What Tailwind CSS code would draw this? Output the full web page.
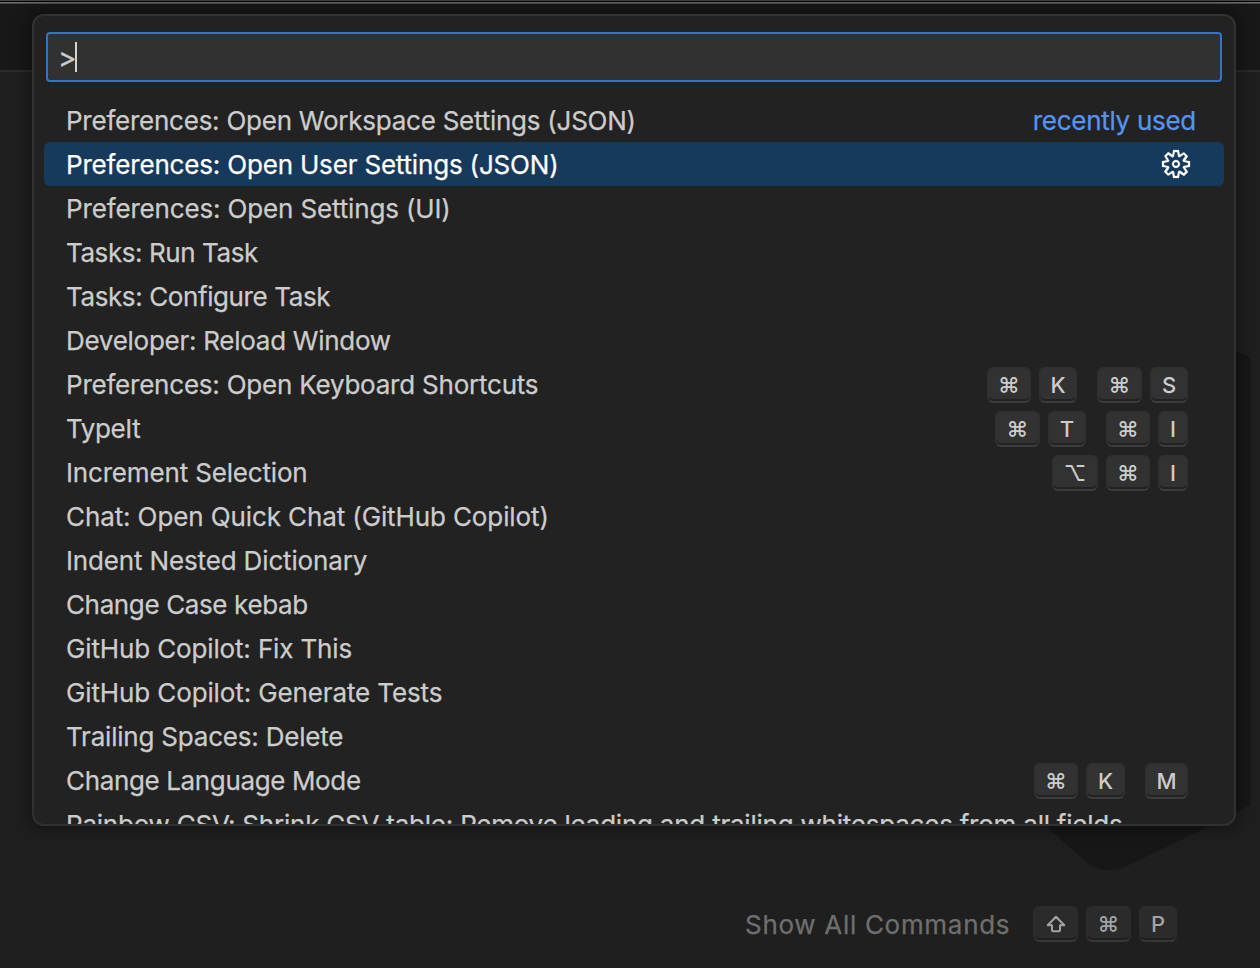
<!DOCTYPE html>
<html lang="en">
<head>
<meta charset="utf-8">
<title>Command Palette</title>
<script src="https://cdn.jsdelivr.net/npm/@tailwindcss/browser@4"></script>
</head>
<body class="relative h-[968px] w-[1260px] overflow-hidden bg-[#1f1f1f] font-['Inter',sans-serif] text-[26px] font-normal text-[#cccccc] [-webkit-text-stroke:0.25px_currentColor]">

<!-- Window edge and title bar -->
<div class="h-px bg-[#44473f]"></div>
<div class="h-px bg-black"></div>
<div class="h-px bg-[#6c6c6a]"></div>
<div class="h-px bg-[#494949]"></div>
<div class="h-[68px] border-b-2 border-[#2b2b2b] bg-[#181818]"></div>

<!-- Editor watermark -->
<svg class="absolute left-0 top-0" width="1260" height="968" viewBox="0 0 1260 968" fill="#171717"><path d="M1200 334L1251 358V804Q1240 811 1226 818L1129 865Q1120 870 1108 870Q1096 870 1086 862L1010 794Z"/></svg>
<div class="absolute left-[745px] top-[906px] flex h-9 items-center text-[#6f6f6f]">
  <span class="w-[288px] whitespace-nowrap tracking-[0.7px] [-webkit-text-stroke:0.25px_#6f6f6f]">Show All Commands</span>
  <div class="flex gap-2 text-[22px] font-medium text-[#a3a3a3] [-webkit-text-stroke:0px]">
    <kbd class="flex h-9 w-[45px] items-center justify-center rounded-[6px] border-2 border-[#2c2c2c] border-b-[#363636] bg-[#2b2b2b] shadow-[inset_0_-2px_0_#202020]"><svg width="20" height="18" viewBox="0 0 20 18" fill="none" stroke="currentColor" stroke-width="2" stroke-linejoin="round"><path d="M10 1.7L18.3 10.3H14V15.2Q14 16.3 12.9 16.3H7.1Q6 16.3 6 15.2V10.3H1.7Z"/></svg></kbd>
    <kbd class="flex h-9 w-[45px] items-center justify-center rounded-[6px] border-2 border-[#2c2c2c] border-b-[#363636] bg-[#2b2b2b] font-['Inter',sans-serif] shadow-[inset_0_-2px_0_#202020]">⌘</kbd>
    <kbd class="flex h-9 w-[38px] items-center justify-center rounded-[6px] border-2 border-[#2c2c2c] border-b-[#363636] bg-[#2b2b2b] font-['Inter',sans-serif] shadow-[inset_0_-2px_0_#202020]">P</kbd>
  </div>
</div>

<!-- Command palette -->
<div class="absolute left-8 top-[14px] flex h-[812px] w-[1204px] flex-col overflow-hidden rounded-[12px] border-2 border-[#313131] bg-[#222222] shadow-[0_0_16px_4px_rgba(0,0,0,0.36)]">
  <div class="mx-3 mt-4 flex h-[50px] shrink-0 items-center rounded-[4px] border-2 border-[#2f74cf] bg-[#313131] pl-[10px]">
    <span class="w-[17px] pt-[1px] text-[28px]">&gt;</span><span class="h-[30px] w-[2px] bg-[#d4d4d4]"></span>
  </div>
  <div id="list" class="mx-[10px] mt-4 flex flex-col"></div>
</div>

<script>
const rows = [
  ["Preferences: Open Workspace Settings (JSON)", "tracking-[-0.24px]"],
  ["Preferences: Open User Settings (JSON)", "tracking-[-0.18px]"],
  ["Preferences: Open Settings (UI)", "tracking-[-0.15px]"],
  ["Tasks: Run Task", "tracking-[-0.43px]"],
  ["Tasks: Configure Task", "tracking-[-0.4px]"],
  ["Developer: Reload Window", "tracking-[-0.27px]"],
  ["Preferences: Open Keyboard Shortcuts", "tracking-[-0.22px]", [[["⌘",44],["K",38]],[["⌘",45],["S",38]]]],
  ["TypeIt", "tracking-[-0.4px]", [[["⌘",45],["T",38]],[["⌘",44],["I",30]]]],
  ["Increment Selection", "tracking-[-0.17px]", [[["⌥",46],["⌘",44],["I",30]]]],
  ["Chat: Open Quick Chat (GitHub Copilot)", "tracking-[-0.11px]"],
  ["Indent Nested Dictionary", "tracking-[-0.15px]"],
  ["Change Case kebab", "tracking-[-0.37px]"],
  ["GitHub Copilot: Fix This", "tracking-[-0.14px]"],
  ["GitHub Copilot: Generate Tests", "tracking-[-0.12px]"],
  ["Trailing Spaces: Delete", "tracking-[-0.21px]"],
  ["Change Language Mode", "tracking-[-0.36px]", [[["⌘",44],["K",39]],[["M",43]]]],
  ["Rainbow CSV: Shrink CSV table: Remove leading and trailing whitespaces from all fields", "tracking-[-0.225px]"],
];
const gear = `<svg class="mr-8 size-8" viewBox="0 0 16 16" fill="currentColor" fill-rule="evenodd"><path stroke="currentColor" stroke-width=".12" d="M9.1 4.4L8.6 2H7.4l-.5 2.4-.7.3-2-1.3-.9.8 1.3 2-.2.7-2.4.5v1.2l2.4.5.3.8-1.3 2 .8.8 2-1.3.8.3.4 2.3h1.2l.5-2.4.8-.3 2 1.3.8-.8-1.3-2 .3-.8 2.3-.4V7.4l-2.4-.5-.3-.8 1.3-2-.8-.8-2 1.3-.7-.2zM9.4 1l.5 2.4L12 2.1l2 2-1.4 2.1 2.4.4v2.8l-2.4.5L14 12l-2 2-2.1-1.4-.5 2.4H6.6l-.5-2.4L4 13.9l-2-2 1.4-2.1L1 9.4V6.6l2.4-.5L2.1 4l2-2 2.1 1.4.4-2.4h2.8zm.6 7c0 1.1-.9 2-2 2s-2-.9-2-2 .9-2 2-2 2 .9 2 2zM8 9c.6 0 1-.4 1-1s-.4-1-1-1-1 .4-1 1 .4 1 1 1z"/></svg>`;
const keycap = ([k, w]) => `<kbd class="flex h-9 items-center justify-center rounded-[6px] border-2 border-[#303030] border-b-[#3c3c3c] bg-[#323232] font-['Inter',sans-serif] shadow-[inset_0_-2px_0_#222222]" style="width:${w}px">${k}</kbd>`;
document.getElementById("list").innerHTML = rows.map(([label, tracking, keys], i) => `
  <div class="flex h-11 shrink-0 items-center justify-between whitespace-nowrap rounded-[6px] pl-[22px] ${i === 1 ? "bg-[#17395c] text-white" : ""}">
    <span class="${tracking}">${label}</span>
    ${i === 0 ? '<span class="mr-7 tracking-[-0.28px] text-[#5794f2] [-webkit-text-stroke:0.25px_#5794f2]">recently used</span>' : ""}
    ${i === 1 ? gear : ""}
    ${keys ? `<div class="mr-9 mt-[2px] flex gap-5 text-[22px] font-medium [-webkit-text-stroke:0px]">${keys.map(c => `<div class="flex gap-2">${c.map(keycap).join("")}</div>`).join("")}</div>` : ""}
  </div>`).join("");
</script>
</body>
</html>
